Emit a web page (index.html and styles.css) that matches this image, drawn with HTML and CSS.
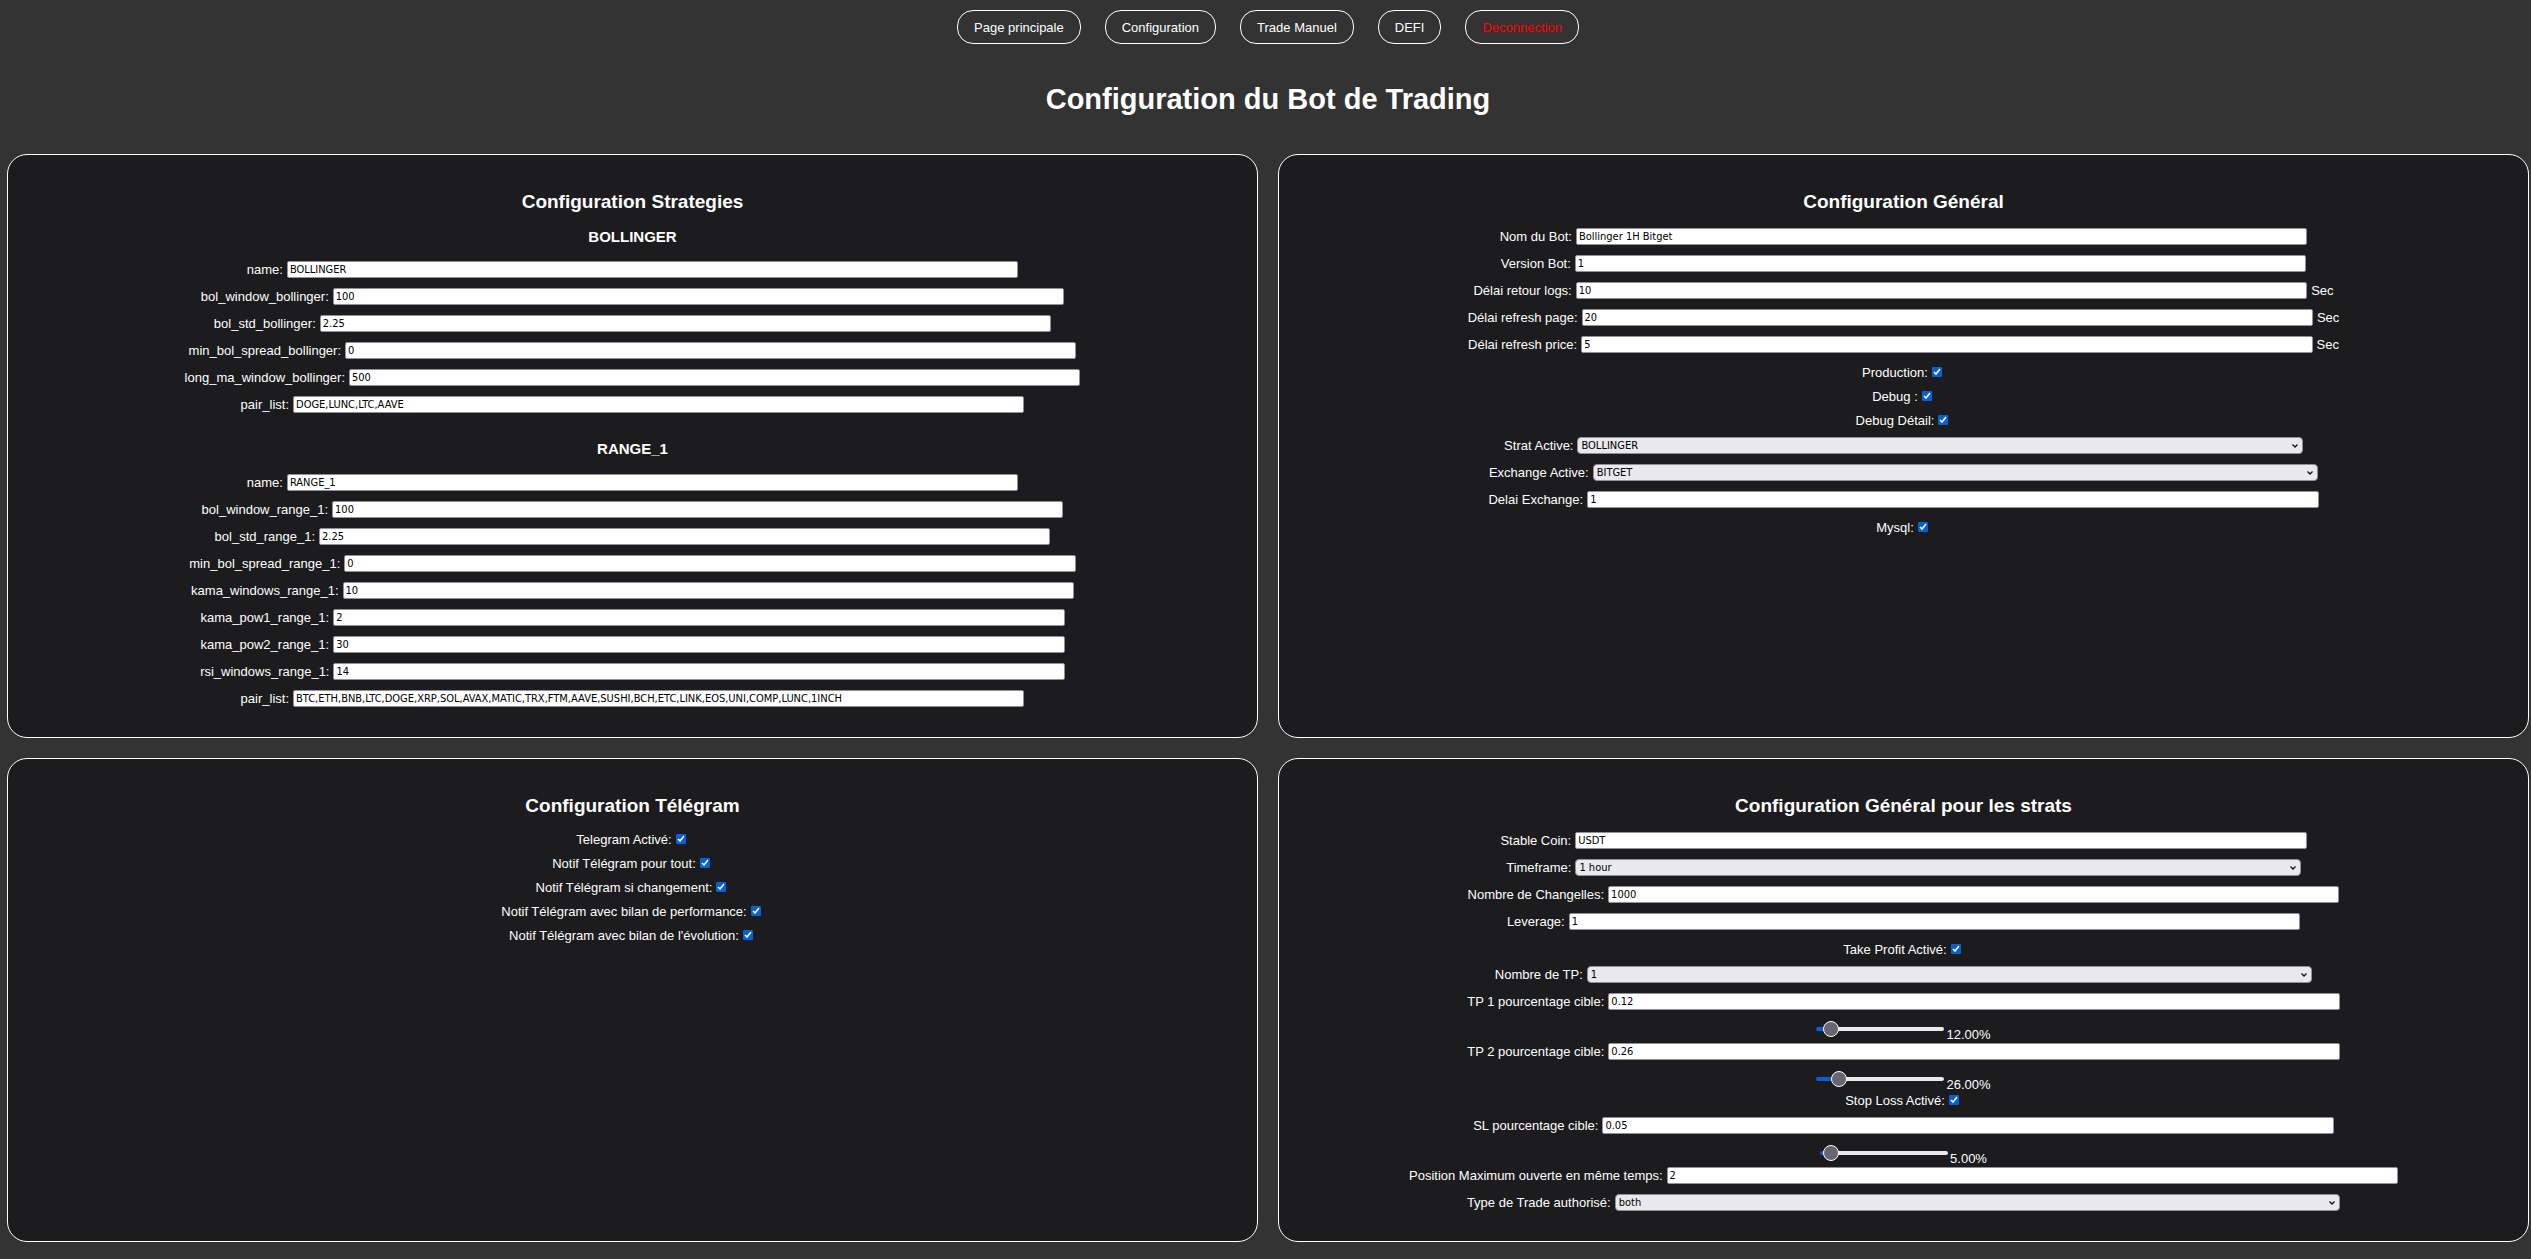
FILE: index.html
```html
<!DOCTYPE html>
<html lang="fr">
<head>
<meta charset="utf-8">
<title>Configuration du Bot de Trading</title>
<link rel="stylesheet" href="styles.css">
</head>
<body>
<nav class="menu">
  <a class="menu-link" href="#">Page principale</a>
  <a class="menu-link" href="#">Configuration</a>
  <a class="menu-link" href="#">Trade Manuel</a>
  <a class="menu-link" href="#">DEFI</a>
  <a class="menu-link logout" href="#">Deconnection</a>
</nav>
<h1>Configuration du Bot de Trading</h1>
<main class="cards">
  <section class="card">
    <h2>Configuration Strategies</h2>
    <h3>BOLLINGER</h3>
    <div class="row"><label for="b1">name:</label><input class="field" type="text" id="b1" value="BOLLINGER"></div>
    <div class="row"><label for="b2">bol_window_bollinger:</label><input class="field" type="text" id="b2" value="100"></div>
    <div class="row"><label for="b3">bol_std_bollinger:</label><input class="field" type="text" id="b3" value="2.25"></div>
    <div class="row"><label for="b4">min_bol_spread_bollinger:</label><input class="field" type="text" id="b4" value="0"></div>
    <div class="row"><label for="b5">long_ma_window_bollinger:</label><input class="field" type="text" id="b5" value="500"></div>
    <div class="row"><label for="b6">pair_list:</label><input class="field" type="text" id="b6" value="DOGE,LUNC,LTC,AAVE"></div>
    <h3 class="next">RANGE_1</h3>
    <div class="row"><label for="r1">name:</label><input class="field" type="text" id="r1" value="RANGE_1"></div>
    <div class="row"><label for="r2">bol_window_range_1:</label><input class="field" type="text" id="r2" value="100"></div>
    <div class="row"><label for="r3">bol_std_range_1:</label><input class="field" type="text" id="r3" value="2.25"></div>
    <div class="row"><label for="r4">min_bol_spread_range_1:</label><input class="field" type="text" id="r4" value="0"></div>
    <div class="row"><label for="r5">kama_windows_range_1:</label><input class="field" type="text" id="r5" value="10"></div>
    <div class="row"><label for="r6">kama_pow1_range_1:</label><input class="field" type="text" id="r6" value="2"></div>
    <div class="row"><label for="r7">kama_pow2_range_1:</label><input class="field" type="text" id="r7" value="30"></div>
    <div class="row"><label for="r8">rsi_windows_range_1:</label><input class="field" type="text" id="r8" value="14"></div>
    <div class="row"><label for="r9">pair_list:</label><input class="field" type="text" id="r9" value="BTC,ETH,BNB,LTC,DOGE,XRP,SOL,AVAX,MATIC,TRX,FTM,AAVE,SUSHI,BCH,ETC,LINK,EOS,UNI,COMP,LUNC,1INCH"></div>
  </section>

  <section class="card">
    <h2>Configuration Général</h2>
    <div class="row"><label for="g1">Nom du Bot:</label><input class="field" type="text" id="g1" value="Bollinger 1H Bitget"></div>
    <div class="row"><label for="g2">Version Bot:</label><input class="field" type="text" id="g2" value="1"></div>
    <div class="row"><label for="g3">Délai retour logs:</label><input class="field" type="text" id="g3" value="10"><span>Sec</span></div>
    <div class="row"><label for="g4">Délai refresh page:</label><input class="field" type="text" id="g4" value="20"><span>Sec</span></div>
    <div class="row"><label for="g5">Délai refresh price:</label><input class="field" type="text" id="g5" value="5"><span>Sec</span></div>
    <div class="checks">
      <div class="row check"><label for="g6">Production:</label><input class="box" type="checkbox" id="g6" checked></div>
      <div class="row check"><label for="g7">Debug :</label><input class="box" type="checkbox" id="g7" checked></div>
      <div class="row check"><label for="g8">Debug Détail:</label><input class="box" type="checkbox" id="g8" checked></div>
    </div>
    <div class="row"><label for="g9">Strat Active:</label><select class="field" id="g9"><option>BOLLINGER</option><option>RANGE_1</option></select></div>
    <div class="row"><label for="g10">Exchange Active:</label><select class="field" id="g10"><option>BITGET</option></select></div>
    <div class="row"><label for="g11">Delai Exchange:</label><input class="field" type="text" id="g11" value="1"></div>
    <div class="checks">
      <div class="row check"><label for="g12">Mysql:</label><input class="box" type="checkbox" id="g12" checked></div>
    </div>
  </section>

  <section class="card">
    <h2>Configuration Télégram</h2>
    <div class="row check"><label for="t1">Telegram Activé:</label><input class="box" type="checkbox" id="t1" checked></div>
    <div class="row check"><label for="t2">Notif Télégram pour tout:</label><input class="box" type="checkbox" id="t2" checked></div>
    <div class="row check"><label for="t3">Notif Télégram si changement:</label><input class="box" type="checkbox" id="t3" checked></div>
    <div class="row check"><label for="t4">Notif Télégram avec bilan de performance:</label><input class="box" type="checkbox" id="t4" checked></div>
    <div class="row check"><label for="t5">Notif Télégram avec bilan de l'évolution:</label><input class="box" type="checkbox" id="t5" checked></div>
  </section>

  <section class="card">
    <h2>Configuration Général pour les strats</h2>
    <div class="row"><label for="s1">Stable Coin:</label><input class="field" type="text" id="s1" value="USDT"></div>
    <div class="row"><label for="s2">Timeframe:</label><select class="field" id="s2"><option>1 hour</option></select></div>
    <div class="row"><label for="s3">Nombre de Changelles:</label><input class="field" type="text" id="s3" value="1000"></div>
    <div class="row"><label for="s4">Leverage:</label><input class="field" type="text" id="s4" value="1"></div>
    <div class="checks">
      <div class="row check"><label for="s5">Take Profit Activé:</label><input class="box" type="checkbox" id="s5" checked></div>
    </div>
    <div class="row"><label for="s6">Nombre de TP:</label><select class="field" id="s6"><option>1</option><option>2</option></select></div>
    <div class="row"><label for="s7">TP 1 pourcentage cible:</label><input class="field" type="text" id="s7" value="0.12"></div>
    <div class="slide"><input class="range" type="range" min="0" max="2" step="0.01" value="0.12" aria-label="TP 1" style="--fill: 10%"><output>12.00%</output></div>
    <div class="row"><label for="s8">TP 2 pourcentage cible:</label><input class="field" type="text" id="s8" value="0.26"></div>
    <div class="slide"><input class="range" type="range" min="0" max="2" step="0.01" value="0.26" aria-label="TP 2" style="--fill: 17%"><output>26.00%</output></div>
    <div class="row check"><label for="s9">Stop Loss Activé:</label><input class="box" type="checkbox" id="s9" checked></div>
    <div class="row"><label for="s10">SL pourcentage cible:</label><input class="field" type="text" id="s10" value="0.05"></div>
    <div class="slide"><input class="range" type="range" min="0" max="2" step="0.01" value="0.05" aria-label="SL" style="--fill: 7%"><output>5.00%</output></div>
    <div class="row"><label for="s11">Position Maximum ouverte en même temps:</label><input class="field" type="text" id="s11" value="2"></div>
    <div class="row"><label for="s12">Type de Trade authorisé:</label><select class="field" id="s12"><option>both</option></select></div>
  </section>
</main>
</body>
</html>
```
FILE: styles.css
```css
body {
  margin: 0;
  padding: 10px 2px 19px 7px;
  background: #333;
  color: #fff;
  font: 13px/15px "Liberation Sans", Arial, sans-serif;
}

.menu {
  display: flex;
  justify-content: center;
  gap: 24px;
}

.menu-link {
  padding: 9px 16px 8px;
  border: 1px solid #fff;
  border-radius: 16px;
  color: #fff;
  text-decoration: none;
}

.menu-link.logout {
  color: #f00;
}

h1 {
  margin: 38px 0;
  font-size: 29px;
  line-height: 34px;
  text-align: center;
}

.cards {
  display: grid;
  grid-template-columns: 1fr 1fr;
  gap: 20px;
}

.card {
  padding: 35px 20px 25px;
  border: 1px solid #fff;
  border-radius: 20px;
  background: #1c1c1e;
}

h2 {
  margin: 0 0 9px;
  font-size: 19px;
  line-height: 24px;
  text-align: center;
}

h3 {
  margin: 0;
  padding: 3px 0 8px;
  font-size: 15px;
  line-height: 22px;
  text-align: center;
}

h3.next {
  padding: 20px 0 9px;
}

.row {
  display: flex;
  align-items: center;
  justify-content: center;
  gap: 4px;
  height: 27px;
  white-space: nowrap;
}

.row.check {
  height: 24px;
}

.checks {
  padding-top: 2px;
}

.field {
  flex: none;
  box-sizing: content-box;
  width: 60%;
  height: 15px;
  margin: 0;
  padding: 0 2px;
  border: 1px solid #8f8f9d;
  border-radius: 2px;
  background: #fff;
  color: #000;
  font: 11px/15px "DejaVu Sans Condensed", "Noto Sans", sans-serif;
}

select.field {
  appearance: none;
  box-sizing: border-box;
  height: 17px;
  padding: 0 16px 0 3px;
  border-radius: 4px;
  background: #e9e9ed url("data:image/svg+xml,%3Csvg xmlns='http://www.w3.org/2000/svg' width='8' height='6'%3E%3Cpath d='M1.5 1.5 4 4l2.500-2.500' fill='none' stroke='%23111' stroke-width='1.300'/%3E%3C/svg%3E") no-repeat right 3px center;
}

.box {
  width: 10px;
  height: 10px;
  margin: 0 3px 0 0;
  accent-color: #0060df;
}

.slide {
  display: flex;
  align-items: flex-start;
  justify-content: center;
  gap: 2px;
  height: 23px;
}

.slide output {
  margin-top: 12px;
}

.range {
  appearance: none;
  width: 128px;
  height: 16px;
  margin: 6px 0 0;
  background: none;
}

.range::-webkit-slider-runnable-track {
  height: 4px;
  border-radius: 2px;
  background: linear-gradient(to right, #0060df var(--fill), #e9e9ed var(--fill));
}

.range::-webkit-slider-thumb {
  appearance: none;
  box-sizing: border-box;
  width: 16px;
  height: 16px;
  margin-top: -6px;
  border: 1px solid #fff;
  border-radius: 50%;
  background: #676774;
}
```
